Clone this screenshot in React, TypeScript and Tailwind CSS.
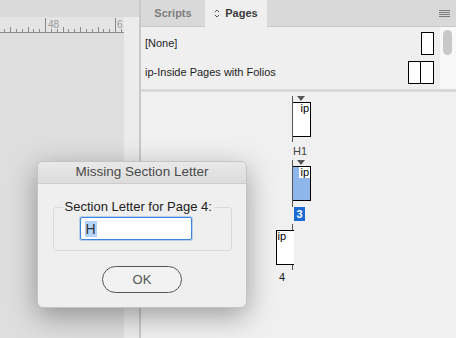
import React from 'react';

const ui = { fontFamily: '"Liberation Sans", Arial, sans-serif' };

const Ruler: React.FC = () => {
  const ticks: { x: number; h: number }[] = [];
  for (let i = -8; i <= 16; i++) {
    const x = 45 + (i * 70) / 12;
    if (x < 0 || x > 124) continue;
    const m = ((i % 12) + 12) % 12;
    ticks.push({ x, h: m === 0 ? 15 : m % 3 === 0 ? 6 : 4 });
  }
  return (
    <svg width="124" height="16" className="block">
      <rect width="124" height="16" fill="#e4e4e4" />
      <line x1="0" y1="15.5" x2="124" y2="15.5" stroke="#8a8a8a" />
      {ticks.map((t, i) => (
        <line key={i} x1={Math.round(t.x) + 0.5} y1={16 - t.h} x2={Math.round(t.x) + 0.5} y2="16" stroke="#8a8a8a" />
      ))}
      <text x="48" y="11" fontSize="10" fill="#9c9c9c" style={ui}>48</text>
      <text x="117" y="11" fontSize="10" fill="#9c9c9c" style={ui}>6</text>
    </svg>
  );
};

const Triangle: React.FC = () => (
  <div className="w-0 h-0 border-l-[4px] border-r-[4px] border-t-[5px] border-l-transparent border-r-transparent border-t-[#555]" />
);

const App: React.FC = () => {
  return (
    <div className="relative w-[456px] h-[338px] overflow-hidden flex bg-[#dedede]" style={ui}>
      {/* document canvas */}
      <div className="flex flex-col w-[124px]">
        <div className="h-[17px] bg-[#dadada]" />
        <Ruler />
        <div className="flex-1 bg-[#dedede]" />
      </div>
      <div className="flex flex-col w-[15px]">
        <div className="h-[17px] bg-[#dadada]" />
        <div className="flex-1 bg-[#ececec]" />
      </div>
      <div className="w-[2px] bg-[#c9c9c9]" />

      {/* pages panel */}
      <div className="flex-1 flex flex-col bg-[#efefef]">
        <div className="h-[27px] flex items-stretch bg-[#d9d9d9] border-b border-[#cacaca]">
          <div className="w-[64px] flex items-center justify-center text-[11px] font-bold text-[#7c7c7c]">Scripts</div>
          <div className="w-[62px] flex items-center justify-center gap-[5px] bg-[#efefef] text-[11px] font-bold text-[#3a3a3a] -mb-px">
            <svg width="6" height="9" viewBox="0 0 6 9">
              <path d="M0.8 3.2 L3 1 L5.2 3.2 M0.8 5.8 L3 8 L5.2 5.8" fill="none" stroke="#555" strokeWidth="1" />
            </svg>
            Pages
          </div>
          <div className="flex-1" />
          <div className="w-[24px] flex items-center justify-center">
            <svg width="11" height="7" viewBox="0 0 11 7">
              <path d="M0 0.5H11M0 2.5H11M0 4.5H11M0 6.5H11" stroke="#7a7a7a" strokeWidth="1" />
            </svg>
          </div>
        </div>

        <div className="h-[62px] flex">
          <div className="flex-1 flex flex-col text-[11px] text-[#1e1e1e]">
            <div className="h-[30px] flex items-center justify-between pl-[4px] pr-[6px] pt-[2px]">
              <span>[None]</span>
              <div className="w-[13px] h-[23px] border-[1.5px] border-black bg-white" />
            </div>
            <div className="h-[30px] flex items-center justify-between pl-[4px] pr-[6px]">
              <span>ip-Inside Pages with Folios</span>
              <div className="flex">
                <div className="w-[13px] h-[23px] border-[1.5px] border-black bg-white" />
                <div className="w-[13px] h-[23px] border-[1.5px] border-l-0 border-black bg-white" />
              </div>
            </div>
          </div>
          <div className="w-[16px] bg-[#f8f8f8] pt-[3px] pl-[3px]">
            <div className="w-[9px] h-[25px] rounded-full bg-[#c8c8c8]" />
          </div>
        </div>
        <div className="h-[3px] bg-[#d8d8d8]" />

        <div className="flex-1 flex flex-col bg-[#f0f0f0] text-[11px] text-[#222]">
          {/* H1 */}
          <div className="ml-[151px] mt-[4px] h-[46px] w-[19px] border-l-[1.5px] border-[#555] flex flex-col">
            <div className="h-[6px] pl-[4px]"><Triangle /></div>
            <div className="h-[35px] w-[18px] border-[1.5px] border-l-0 border-black bg-white flex justify-end pr-[1px] leading-[11px] text-black">ip</div>
          </div>
          <div className="ml-[152px] h-[18px] w-[14px] flex items-center justify-center text-[#444]">H1</div>
          {/* 3 */}
          <div className="ml-[151px] h-[47px] w-[19px] border-l-[1.5px] border-[#555] flex flex-col">
            <div className="h-[6px] pl-[4px]"><Triangle /></div>
            <div className="relative h-[35px] w-[18px] border-[1.5px] border-l-0 border-black bg-[#8fb6ea]">
              <span className="absolute right-0 top-0 bg-white px-[1px] leading-[11px] text-black">ip</span>
            </div>
          </div>
          <div className="ml-[153px] h-[14px] w-[11px] bg-[#1b6ad6] text-white font-bold flex items-center justify-center">3</div>
          {/* 4 */}
          <div className="ml-[151px] mt-[3px] h-[46px] w-[2px] border-l-[1.5px] border-[#555] flex flex-col relative">
            <div className="h-[6px]" />
            <div className="absolute right-[0.5px] top-[6px] h-[35px] w-[18px] border-[1.5px] border-r-0 border-black bg-white pl-[1px] leading-[11px] text-black">ip</div>
          </div>
          <div className="ml-[137px] h-[14px] w-[8px] flex items-center justify-center">4</div>
        </div>
      </div>

      {/* modal dialog */}
      <div className="absolute left-[37px] top-[161px] w-[210px] h-[147px] rounded-[6px] bg-[#efefef] border border-[#c4c4c4] shadow-[0_8px_28px_rgba(0,0,0,0.35)] flex flex-col overflow-hidden">
        <div className="h-[22px] flex items-center justify-center bg-gradient-to-b from-[#e9e9e9] to-[#dcdcdc] border-b border-[#cdcdcd] text-[13.5px] text-[#4a4a4a]">
          Missing Section Letter
        </div>
        <div className="flex-1 flex flex-col items-center">
          <div className="relative mt-[23px] w-[179px] h-[44px] border border-[#dadada] rounded-[3px]">
            <span className="absolute left-[9px] -top-[9px] bg-[#efefef] px-[2px] text-[13px] leading-[16px] text-[#222]">Section Letter for Page 4:</span>
            <div className="absolute left-[26px] top-[9px] w-[112px] h-[23px] bg-white border border-[#3d86e0] rounded-[2px] shadow-[0_0_0_1px_rgba(80,150,230,0.35)] flex items-center pl-[4px]">
              <span className="bg-[#b4d3f8] text-[14px] leading-[16px] text-[#333] px-[1px]">H</span>
            </div>
          </div>
          <div className="mt-[15px] w-[80px] h-[27px] rounded-full border border-[#555] bg-[#f2f2f2] flex items-center justify-center text-[13px] text-[#555]">
            OK
          </div>
        </div>
      </div>
    </div>
  );
};

export default App;
